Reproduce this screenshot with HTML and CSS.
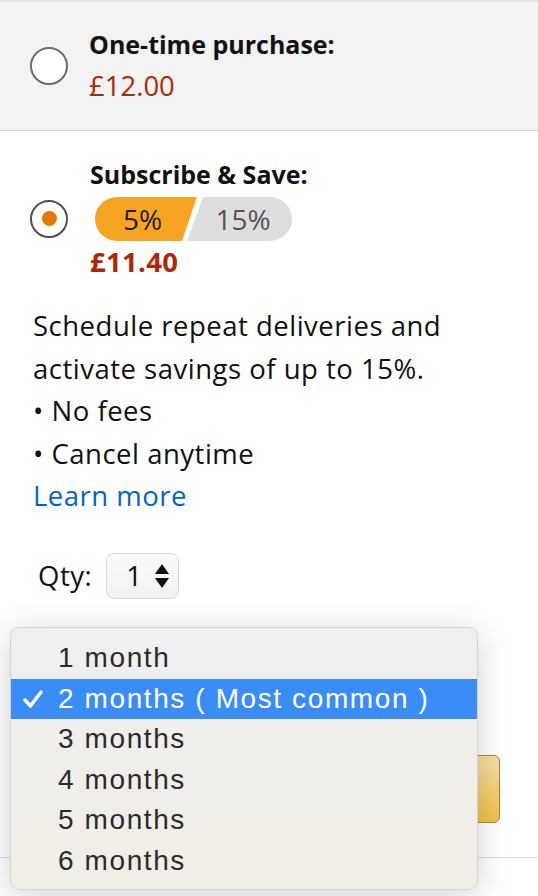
FILE: index.html
```html
<!DOCTYPE html>
<html lang="en">
<head>
<meta charset="utf-8">
<title>Subscribe &amp; Save</title>
<link rel="stylesheet" href="styles.css">
</head>
<body>
<div class="page">
  <div class="opt opt-one">
    <span class="radio"></span>
    <div class="opt-text">
      <div class="opt-title">One-time purchase:</div>
      <div class="price">£12.00</div>
    </div>
  </div>
  <div class="opt opt-sub">
    <span class="radio radio-on"><span class="dot"></span></span>
    <div class="opt-text">
      <div class="opt-title">Subscribe &amp; Save:</div>
      <div class="pill"><span class="seg seg-on">5%</span><span class="seg seg-off">15%</span></div>
      <div class="price price-bold">£11.40</div>
    </div>
  </div>
  <div class="desc">
    <div>Schedule repeat deliveries and</div>
    <div>activate savings of up to 15%.</div>
    <div>• No fees</div>
    <div>• Cancel anytime</div>
    <div><a class="link" href="#">Learn more</a></div>
  </div>
  <div class="qty">
    <span class="qty-label">Qty:</span>
    <span class="qty-select"><span class="qty-val">1</span>
      <svg class="qty-arrows" width="16" height="26" viewBox="0 0 16 26"><path d="M8 1 L15 11 L1 11 Z" fill="#111"/><path d="M1 15 L15 15 L8 25 Z" fill="#111"/></svg>
    </span>
  </div>
  <div class="actions">
    <button class="btn" type="button">Subscribe Now</button>
  </div>
</div>
<ul class="menu">
  <li class="item">1 month</li>
  <li class="item item-sel"><svg class="check" width="20" height="20" viewBox="0 0 20 20"><path d="M2 11 L7.5 17 L18 3" fill="none" stroke="#fff" stroke-width="3.4" stroke-linecap="round" stroke-linejoin="round"/></svg>2 months ( Most common )</li>
  <li class="item">3 months</li>
  <li class="item">4 months</li>
  <li class="item">5 months</li>
  <li class="item">6 months</li>
</ul>
</body>
</html>
```
FILE: styles.css
```css
* { box-sizing: border-box; }
html, body { margin: 0; padding: 0; background: #fff; }
body { font-family: "Open Sans", "Noto Sans", sans-serif; color: #111; width: 538px; height: 896px; overflow: hidden; position: relative; }
.page { border-bottom: 1px solid #dcdcdc; }

.opt { display: flex; align-items: center; gap: 21px; padding-left: 30px; }
.opt-one { background: #f3f3f3; border-top: 2px solid #e6e6e6; border-bottom: 1px solid #d9d9d9; padding-top: 27px; padding-bottom: 28px; }
.opt-sub { padding-top: 28px; gap: 22px; }

.radio { width: 38px; height: 38px; border-radius: 50%; border: 2px solid #6c6c6c; background: #fff; display: flex; align-items: center; justify-content: center; flex: none; }
.radio-on { border-color: #4f4f4f; }
.dot { width: 15px; height: 15px; border-radius: 50%; background: #e77600; }

.opt-title { font-size: 25px; line-height: 30px; font-weight: 700; letter-spacing: 0; }
.price { font-size: 27.5px; line-height: 32px; color: #b12704; margin-top: 11px; }
.price-bold { font-weight: 700; margin-top: 5px; letter-spacing: 0.3px; }

.pill { display: flex; width: 197px; height: 44px; border-radius: 22px; overflow: hidden; margin-top: 8px; margin-left: 5px; font-size: 28px; }
.seg { display: flex; align-items: center; justify-content: center; }
.seg-on { width: 102px; background: #f8a423; color: #1e1e1e; padding-right: 7px; clip-path: polygon(0 0, 100% 0, calc(100% - 15px) 100%, 0 100%); }
.seg-off { flex: 1; margin-left: -10px; background: #dedede; color: #555; padding-left: 7px; clip-path: polygon(16px 0, 100% 0, 100% 100%, 0 100%); }

.desc { margin-top: 27px; padding-left: 33px; font-size: 27.5px; line-height: 42.5px; letter-spacing: 0.5px; color: #111; }
.link { color: #0066c0; text-decoration: none; }

.qty { display: flex; align-items: center; margin-top: 35px; padding-left: 38px; gap: 14px; font-size: 27.5px; letter-spacing: 0.5px; }
.qty-select { display: flex; align-items: center; width: 73px; height: 46px; border: 1px solid #dadada; border-radius: 8px; background: linear-gradient(#fbfbfb, #f1f1f1); padding-left: 19px; gap: 12px; }
.qty-val { line-height: 1; }

.actions { display: flex; justify-content: flex-end; padding-right: 38px; margin-top: 156px; padding-bottom: 34px; }
.btn { width: 220px; height: 68px; border: 1px solid #a88734; border-radius: 6px; background: linear-gradient(#f7dfa5, #f0c14b); font-family: inherit; font-size: 22px; color: #111; }

.menu { position: absolute; left: 10px; top: 627px; width: 468px; height: 263px; margin: 0; padding: 10px 0 0; list-style: none; border-radius: 9px; border: 1px solid #d3d3d3; background: linear-gradient(#efefef, #f1eee5); box-shadow: 0 6px 34px rgba(0,0,0,0.18); font-family: "Liberation Sans", Arial, sans-serif; font-size: 28px; letter-spacing: 1.6px; color: #2b2b2b; }
.item { height: 40.5px; line-height: 40.5px; padding-left: 47px; position: relative; }
.item-sel { background: #3a8cf6; color: #fff; }
.check { position: absolute; left: 12px; top: 10px; }
```
